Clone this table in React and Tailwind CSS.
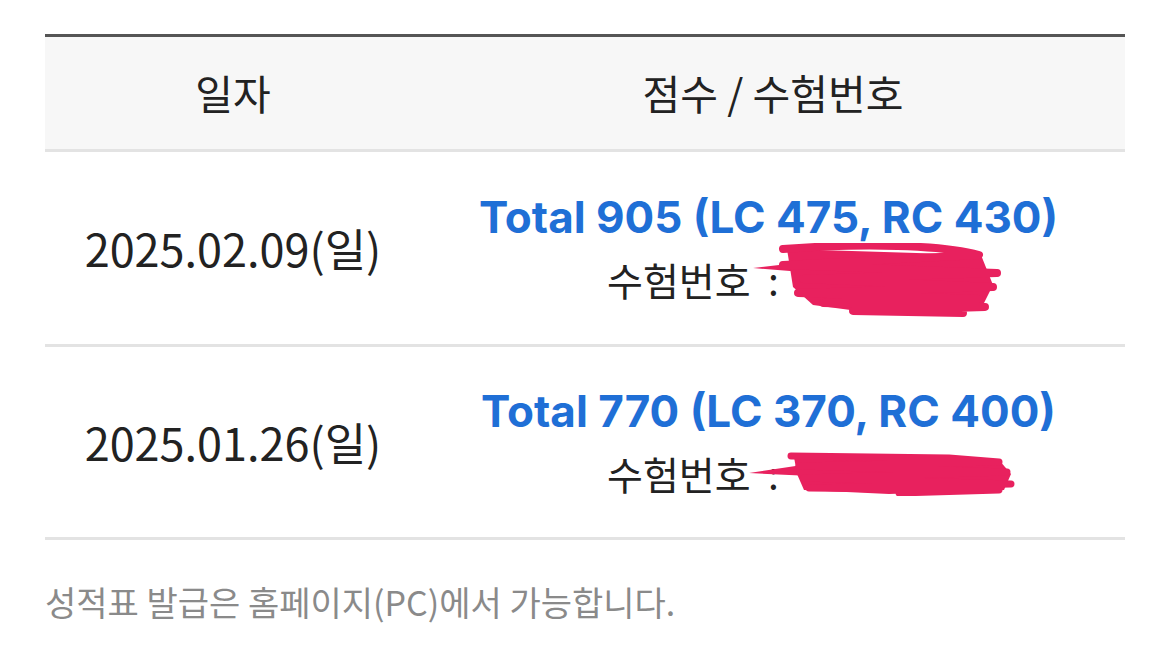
import React from "react";

const KR = { fontFamily: "'Noto Sans CJK KR', sans-serif" };

function Scribble1() {
  return (
    <svg width="250" height="76" viewBox="0 0 250 76" className="absolute left-0 top-0" fill="none">
      <path d="M0 25 L60 18 L62 30 Z" fill="#e8215e" />
      <path d="M34 6 L228 12 L240 42 L230 62 L120 70 L60 62 L40 44 Z" fill="#e8215e" />
      <path
        d="M30 6 C110 0 190 2 226 12 L30 22 L244 30 L50 36 L240 44 L45 50 L226 56 L70 60 L232 64 L100 68 L210 70"
        stroke="#e8215e"
        strokeWidth="8"
        strokeLinecap="round"
        strokeLinejoin="round"
      />
    </svg>
  );
}

function Scribble2() {
  return (
    <svg width="266" height="44" viewBox="0 0 266 44" className="absolute left-0 top-0" fill="none">
      <path d="M0 21 L60 12 L62 24 Z" fill="#e8215e" />
      <path d="M45 5 L250 8 L262 22 L255 38 L140 42 L55 38 L48 22 Z" fill="#e8215e" />
      <path
        d="M42 4 L200 6 L250 10 L50 14 L258 20 L55 26 L262 32 L60 36 L250 38 L150 41"
        stroke="#e8215e"
        strokeWidth="7"
        strokeLinecap="round"
        strokeLinejoin="round"
      />
    </svg>
  );
}

function Row({ date, total, lc, rc, h, scribble, sw, sh, sx, sy }) {
  return (
    <div className="grid grid-cols-[376px_1fr] border-b-[3px] border-[#e3e3e3]" style={{ height: h }}>
      <div className="flex items-center justify-center text-[45px] text-[#222222]" style={KR}>
        {date}
      </div>
      <div className="flex flex-col items-center justify-center">
        <div
          className="pr-[9px] text-[44px] font-bold leading-[66px] text-[#1f6fd6]"
          style={{ fontFamily: "Inter, 'Noto Sans CJK KR', sans-serif" }}
        >
          Total {total} (LC {lc}, RC {rc})
        </div>
        <div className="relative -mt-[4px] flex items-center leading-[66px] text-[39px] text-[#222222]" style={KR}>
          <span className="whitespace-pre">수험번호  :</span>
          <span className="inline-block w-[160px]" />
          <div className="absolute" style={{ left: sx, top: sy, width: sw, height: sh }}>
            {scribble}
          </div>
        </div>
      </div>
    </div>
  );
}

export default function App() {
  return (
    <div className="min-h-[655px] w-[1170px] bg-white px-[45px] pt-[34px]">
      <div className="border-t-[3px] border-[#555555]">
        <div className="grid h-[115px] grid-cols-[376px_1fr] border-b-[3px] border-[#e3e3e3] bg-[#f7f7f7] text-[41px] text-[#222222]" style={KR}>
          <div className="flex items-center justify-center">일자</div>
          <div className="flex items-center justify-center">점수 / 수험번호</div>
        </div>
        <Row
          date="2025.02.09(일)"
          total="905"
          lc="475"
          rc="430"
          h={195}
          scribble={<Scribble1 />}
          sx={146}
          sy={-3}
          sw={250}
          sh={76}
        />
        <Row
          date="2025.01.26(일)"
          total="770"
          lc="370"
          rc="400"
          h={193}
          scribble={<Scribble2 />}
          sx={142}
          sy={12}
          sw={266}
          sh={44}
        />
      </div>
      <div className="pt-[36px] text-[34px] text-[#8a8a8a]" style={KR}>
        성적표 발급은 홈페이지(PC)에서 가능합니다.
      </div>
    </div>
  );
}
